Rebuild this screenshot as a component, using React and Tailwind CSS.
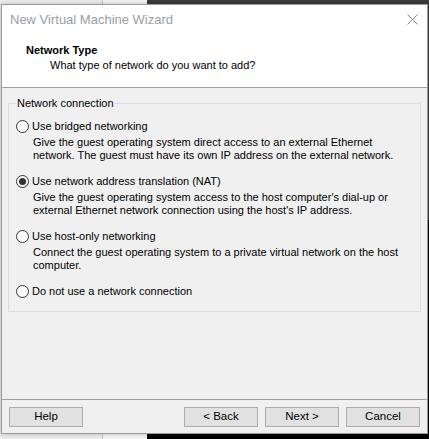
const font = { fontFamily: '"Liberation Sans", Arial, sans-serif' };

const options = [
  {
    label: "Use bridged networking",
    desc: "Give the guest operating system direct access to an external Ethernet network. The guest must have its own IP address on the external network.",
  },
  {
    label: "Use network address translation (NAT)",
    desc: "Give the guest operating system access to the host computer's dial-up or external Ethernet network connection using the host's IP address.",
    checked: true,
  },
  {
    label: "Use host-only networking",
    desc: "Connect the guest operating system to a private virtual network on the host computer.",
  },
  { label: "Do not use a network connection" },
];

function Radio({ checked }) {
  return (
    <span className="flex h-[13px] w-[13px] shrink-0 items-center justify-center rounded-full border border-[#333] bg-white">
      {checked && <span className="h-[7px] w-[7px] rounded-full bg-[#333]" />}
    </span>
  );
}

function WinButton({ children }) {
  return (
    <button className="h-[20px] w-[74px] border border-[#adadad] bg-[#e1e1e1] text-[11.5px] leading-none text-black">
      {children}
    </button>
  );
}

export default function App() {
  return (
    <div className="relative h-[439px] w-[429px] overflow-hidden" style={font}>
      {/* desktop behind the dialog */}
      <div className="flex h-full w-full">
        <div className="w-[103px] border-r border-[#c8c8c8] bg-[#f0f0f0]" />
        <div className="w-[44px] bg-[#f7f7f7]" />
        <div className="flex flex-1 flex-col">
          <div className="h-[220px] bg-[#3c3c3c]" />
          <div className="flex-1 bg-black" />
        </div>
      </div>

      {/* dialog window */}
      <div className="absolute left-[1px] top-[4px] flex h-[430px] w-[427px] flex-col border border-[#9a9a9a] bg-[#f0f0f0] shadow-[0_0_6px_rgba(0,0,0,0.25)]">
        <div className="flex h-[29px] items-center justify-between bg-white pl-[8px] pr-[9px]">
          <span className="text-[13px] text-[#9a9ea4]">New Virtual Machine Wizard</span>
          <svg width="11" height="11" viewBox="0 0 11 11">
            <path d="M0.5 0.5 L10.5 10.5 M10.5 0.5 L0.5 10.5" stroke="#8a8a8a" strokeWidth="1" />
          </svg>
        </div>

        <div className="flex h-[54px] flex-col border-b border-[#a0a0a0] bg-white pt-[9px] text-[11px] leading-[15px] text-black">
          <span className="pl-[24px] font-bold">Network Type</span>
          <span className="pl-[48px]">What type of network do you want to add?</span>
        </div>

        <div className="flex-1 border-b border-[#a0a0a0] px-[6px] pt-[8px]">
          <fieldset className="border border-[#dcdcdc] pb-[12px] pl-[7px] pr-[6px] pt-[8px]">
            <legend className="px-[1px] text-[11px] leading-[15px] text-black">Network connection</legend>
            <div className="flex flex-col gap-[12px]">
              {options.map((o) => (
                <div key={o.label} className="flex flex-col gap-[2px] text-[11px] text-black">
                  <div className="flex h-[15px] items-center gap-[3px]">
                    <Radio checked={o.checked} />
                    <span className="leading-[15px]">{o.label}</span>
                  </div>
                  {o.desc && <p className="pl-[17px] pr-[14px] leading-[13px]">{o.desc}</p>}
                </div>
              ))}
            </div>
          </fieldset>
        </div>

        <div className="flex h-[33px] items-start px-[7px] pt-[7px]">
          <WinButton>Help</WinButton>
          <div className="ml-auto flex gap-[7px]">
            <WinButton>&lt; Back</WinButton>
            <WinButton>Next &gt;</WinButton>
            <WinButton>Cancel</WinButton>
          </div>
        </div>
      </div>
    </div>
  );
}
